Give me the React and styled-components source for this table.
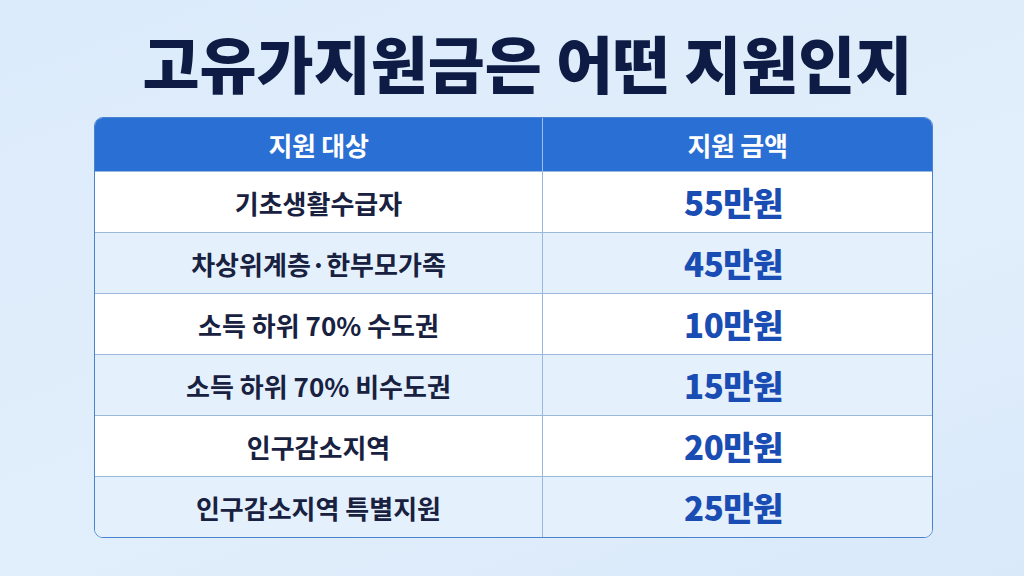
import React from 'react';
import styled, { createGlobalStyle } from 'styled-components';

const GlobalStyle = createGlobalStyle`
  html, body {
    margin: 0;
    padding: 0;
  }
  body {
    font-family: "Noto Sans CJK KR", "Noto Sans", sans-serif;
    background: #dcebfb;
  }
`;

const Page = styled.main`
  width: 1024px;
  height: 576px;
  box-sizing: border-box;
  padding: 0 91px 0 94px;
  display: flex;
  flex-direction: column;
  background: linear-gradient(160deg, #dcebfb 0%, #e1eefb 60%, #d9e9fa 100%);
`;

const Title = styled.h1`
  margin: 0;
  height: 117px;
  display: flex;
  align-items: center;
  justify-content: center;
  font-size: 62px;
  font-weight: 900;
  letter-spacing: 0;
  color: #0e1c45;
  padding: 6px 0 0 28px;
  box-sizing: border-box;
`;

const Table = styled.div`
  display: grid;
  grid-template-columns: 447px 1fr;
  border: 1.5px solid #4a82cf;
  border-radius: 9px;
  overflow: hidden;
  background: #fff;
`;

const HeadCell = styled.div`
  height: 53px;
  display: flex;
  align-items: center;
  justify-content: center;
  background: #2a6fd3;
  color: #fff;
  font-size: 26px;
  font-weight: 700;
  letter-spacing: -0.3px;
  border-left: ${({ $first }) => ($first ? 'none' : '1px solid #9cc0ea')};
`;

const Cell = styled.div`
  height: 61px;
  display: flex;
  align-items: center;
  justify-content: center;
  background: ${({ $alt }) => ($alt ? '#e4f0fc' : '#ffffff')};
  border-top: 1px solid #9ab8dc;
  border-left: ${({ $first }) => ($first ? 'none' : '1px solid #9ab8dc')};
  box-sizing: border-box;
`;

const Label = styled.span`
  font-size: 26px;
  font-weight: 700;
  color: #18213f;
  letter-spacing: 0;
`;

const Amount = styled.span`
  font-size: 33px;
  font-weight: 800;
  color: #1a4db3;
  letter-spacing: -0.5px;
  margin-right: 8px;
`;

const rows = [
  { target: '기초생활수급자', amount: '55만원' },
  { target: '차상위계층·한부모가족', amount: '45만원' },
  { target: '소득 하위 70% 수도권', amount: '10만원' },
  { target: '소득 하위 70% 비수도권', amount: '15만원' },
  { target: '인구감소지역', amount: '20만원' },
  { target: '인구감소지역 특별지원', amount: '25만원' },
];

const App = () => {
  return (
    <>
      <GlobalStyle />
      <Page>
        <Title>고유가지원금은 어떤 지원인지</Title>
        <Table>
          <HeadCell $first>지원 대상</HeadCell>
          <HeadCell>지원 금액</HeadCell>
          {rows.map((row, i) => (
            <React.Fragment key={row.target}>
              <Cell $first $alt={i % 2 === 1}>
                <Label>{row.target}</Label>
              </Cell>
              <Cell $alt={i % 2 === 1}>
                <Amount>{row.amount}</Amount>
              </Cell>
            </React.Fragment>
          ))}
        </Table>
      </Page>
    </>
  );
};

export default App;
